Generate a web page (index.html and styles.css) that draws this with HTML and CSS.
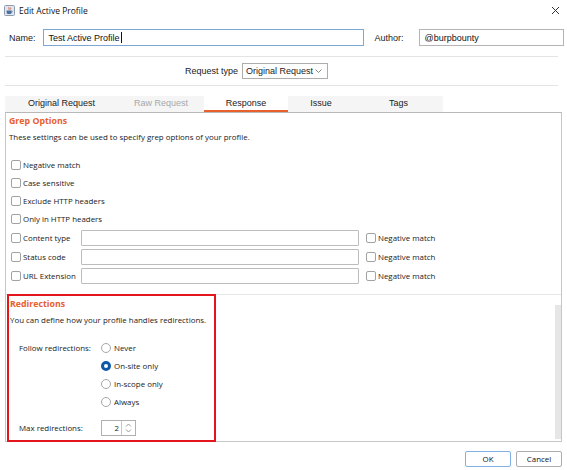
FILE: index.html
```html
<!DOCTYPE html>
<html lang="en">
<head>
  <meta charset="UTF-8" />
  <title>Edit Active Profile</title>
  <link rel="stylesheet" href="styles.css">
</head>
<body>
  <div class="titlebar">
    <svg class="app-icon" width="11" height="11" viewBox="0 0 11 11">
      <rect x="0.5" y="0.5" width="10" height="10" rx="1" fill="#dfe6ef" stroke="#8e9cb0"/>
      <path d="M5 2.2c-1 1 .8 1.4 0 2.6M6.6 2.6c-.6.7.5 1 0 1.8" stroke="#d9502a" stroke-width="0.9" fill="none"/>
      <path d="M2.6 5.6h5v1.8c0 1-1 1.6-2.5 1.6s-2.5-.6-2.5-1.6z" fill="#4d6f9a"/>
      <path d="M7.6 6.1c1 0 1 1.3 0 1.3" stroke="#4d6f9a" stroke-width="0.7" fill="none"/>
    </svg>
    <span class="title">Edit Active Profile</span>
    <svg class="close" width="9" height="9" viewBox="0 0 9 9">
      <path d="M1 1l7 7M8 1l-7 7" stroke="#333" stroke-width="1"/>
    </svg>
  </div>

  <div class="meta-row">
    <span class="meta-label">Name:</span>
    <div class="field name-field">Test Active Profile<span class="caret"></span></div>
    <span class="meta-label author-label">Author:</span>
    <div class="field author-field">@burpbounty</div>
  </div>

  <div class="rule rule-top"></div>

  <div class="request-row">
    <span class="meta-label">Request type</span>
    <div class="select">
      <span>Original Request</span>
      <svg width="7" height="4" viewBox="0 0 7 4"><path d="M0.5 0.5l3 3 3-3" stroke="#888" fill="none"/></svg>
    </div>
  </div>

  <div class="rule rule-mid"></div>

  <div class="tabs">
    <div class="tab tab-original">Original Request</div>
    <div class="tab tab-raw disabled">Raw Request</div>
    <div class="tab tab-response active">Response</div>
    <div class="tab tab-issue">Issue</div>
    <div class="tab tab-tags">Tags</div>
  </div>

  <div class="panel">
    <div class="content">
      <section class="grep">
        <h2 class="heading">Grep Options</h2>
        <p class="desc">These settings can be used to specify grep options of your profile.</p>

        <div class="check-list">
          <div class="check-row"><span class="box"></span>Negative match</div>
          <div class="check-row"><span class="box"></span>Case sensitive</div>
          <div class="check-row"><span class="box"></span>Exclude HTTP headers</div>
          <div class="check-row"><span class="box"></span>Only in HTTP headers</div>
        </div>

        <div class="field-list">
          <div class="field-row">
            <div class="check-row label-col"><span class="box"></span>Content type</div>
            <div class="text-input"></div>
            <div class="check-row"><span class="box"></span>Negative match</div>
          </div>
          <div class="field-row">
            <div class="check-row label-col"><span class="box"></span>Status code</div>
            <div class="text-input"></div>
            <div class="check-row"><span class="box"></span>Negative match</div>
          </div>
          <div class="field-row">
            <div class="check-row label-col"><span class="box"></span>URL Extension</div>
            <div class="text-input"></div>
            <div class="check-row"><span class="box"></span>Negative match</div>
          </div>
        </div>
      </section>

      <div class="lower">
        <section class="redirections">
          <h2 class="heading">Redirections</h2>
          <p class="desc">You can define how your profile handles redirections.</p>

          <div class="follow">
            <span class="follow-label">Follow redirections:</span>
            <div class="radio-list">
              <div class="radio-row"><span class="radio"></span>Never</div>
              <div class="radio-row"><span class="radio checked"></span>On-site only</div>
              <div class="radio-row"><span class="radio"></span>In-scope only</div>
              <div class="radio-row"><span class="radio"></span>Always</div>
            </div>
          </div>

          <div class="max-row">
            <span class="follow-label">Max redirections:</span>
            <div class="spinner">
              <span class="spin-value">2</span>
              <span class="spin-buttons">
                <svg width="7" height="10" viewBox="0 0 7 10">
                  <path d="M1 3.5l2.5-2.5 2.5 2.5M1 6.5l2.5 2.5 2.5-2.5" stroke="#999" fill="none"/>
                </svg>
              </span>
            </div>
          </div>
        </section>
        <div class="scrollbar"><div class="thumb"></div></div>
      </div>
    </div>
  </div>

  <div class="footer">
    <button class="btn btn-ok">OK</button>
    <button class="btn">Cancel</button>
  </div>
</body>
</html>
```

FILE: styles.css
```css
body {
  margin: 0;
  width: 567px;
  height: 470px;
  background: #fff;
  color: #222;
  font-family: 'Liberation Sans', Arial, sans-serif;
  font-size: 9px;
  overflow: hidden;
}

/* title bar */
.titlebar {
  height: 20px;
  display: flex;
  align-items: center;
  padding-left: 4px;
}
.app-icon {
  margin-right: 4px;
}
.title {
  font-family: 'Open Sans', sans-serif;
  font-size: 8.5px;
  color: #111;
}
.close {
  margin-left: auto;
  margin-right: 7px;
}

/* name / author */
.meta-row {
  display: flex;
  align-items: center;
  margin-top: 9px;
  padding-left: 9px;
}
.meta-label {
  color: #222;
  white-space: nowrap;
}
.field {
  box-sizing: border-box;
  height: 17px;
  border: 1px solid #b4b4b4;
  display: flex;
  align-items: center;
  padding-left: 5px;
  color: #111;
}
.name-field {
  width: 321px;
  margin-left: 7px;
  border-color: #7ea7d8;
}
.caret {
  display: inline-block;
  width: 1px;
  height: 11px;
  background: #111;
  margin-left: 1px;
}
.author-label {
  margin-left: 11px;
}
.author-field {
  width: 145px;
  margin-left: 15px;
}

.rule {
  height: 1px;
  background: #e4e4e4;
  margin: 0 9px 0 5px;
}
.rule-top {
  margin-top: 10px;
}
.rule-mid {
  margin-top: 6px;
}

/* request type */
.request-row {
  display: flex;
  align-items: center;
  margin: 6px 0 0 185px;
}
.select {
  box-sizing: border-box;
  height: 16px;
  width: 86px;
  margin-left: 4px;
  border: 1px solid #adadad;
  display: flex;
  align-items: center;
  padding: 0 5px 0 3px;
  justify-content: space-between;
  white-space: nowrap;
}

/* tabs */
.tabs {
  display: flex;
  width: 438px;
  height: 16px;
  margin: 10px 0 0 5px;
  background: #f5f5f5;
}
.tab {
  text-align: center;
  line-height: 15px;
  color: #222;
  box-sizing: border-box;
  white-space: nowrap;
}
.tab-original { width: 113px; }
.tab-raw { width: 86px; }
.tab-response { width: 84px; }
.tab-issue { width: 66px; }
.tab-tags { width: 89px; }
.tab.disabled {
  color: #a8a8a8;
}
.tab.active {
  background: #fff;
  border-bottom: 2px solid #e8602c;
}

/* main panel */
.panel {
  box-sizing: border-box;
  width: 557px;
  height: 330px;
  margin-left: 5px;
  border: 1px solid #c6c6c6;
  border-top-color: #b8b8b8;
}
.content {
  font-family: 'Open Sans', 'Noto Sans', sans-serif;
  font-size: 7.9px;
  color: #1a1a1a;
}
.heading {
  margin: 0;
  font-size: 8.8px;
  font-weight: bold;
  color: #e8602c;
  line-height: 14px;
}
.grep .heading {
  padding-top: 1px;
}
.desc {
  margin: 2px 0 0;
  line-height: 14px;
}
.grep {
  padding-left: 3px;
}
.check-list {
  margin-top: 12px;
}
.check-row {
  display: flex;
  align-items: center;
  height: 18px;
  white-space: nowrap;
}
.check-list .check-row {
  padding-left: 2px;
}
.box {
  box-sizing: border-box;
  width: 10px;
  height: 10px;
  border: 1px solid #a2a2a2;
  border-radius: 2px;
  margin-right: 2px;
  background: #fff;
}
.field-row {
  display: flex;
  align-items: center;
  height: 19px;
  padding-left: 2px;
}
.label-col {
  width: 70px;
}
.text-input {
  box-sizing: border-box;
  width: 278px;
  height: 16px;
  border: 1px solid #bcbcbc;
  border-radius: 1px;
  margin-right: 7px;
}

.lower {
  display: flex;
  margin-top: 9px;
  border-top: 1px solid #e6e6e6;
}
.redirections {
  box-sizing: border-box;
  width: 209px;
  height: 148px;
  margin-left: 1px;
  margin-top: -1px;
  border: 2px solid #e3141c;
  padding: 1px 0 0 1px;
}
.redirections .desc {
  margin-top: 2px;
}
.follow {
  display: flex;
  margin-top: 12px;
  padding-left: 9px;
}
.follow-label {
  width: 82px;
  line-height: 18px;
  white-space: nowrap;
}
.radio-row {
  display: flex;
  align-items: center;
  height: 18px;
  white-space: nowrap;
}
.radio {
  box-sizing: border-box;
  width: 10px;
  height: 10px;
  border: 1px solid #a6a6a6;
  border-radius: 50%;
  margin-right: 3px;
}
.radio.checked {
  border: 3px solid #0f5aa8;
}
.max-row {
  display: flex;
  align-items: center;
  margin-top: 8px;
  padding-left: 9px;
}
.spinner {
  box-sizing: border-box;
  display: flex;
  width: 35px;
  height: 16px;
  border: 1px solid #b0b0b0;
}
.spin-value {
  width: 20px;
  text-align: right;
  padding-right: 2px;
  box-sizing: border-box;
  line-height: 14px;
  border-right: 1px solid #c8c8c8;
}
.spin-buttons {
  flex: 1;
  display: flex;
  align-items: center;
  justify-content: center;
}
.scrollbar {
  margin-left: auto;
  width: 6px;
}
.thumb {
  margin-top: 10px;
  height: 134px;
  background: #e6e6e6;
}

/* footer */
.footer {
  display: flex;
  justify-content: flex-end;
  gap: 5px;
  margin: 9px 5px 0 0;
}
.btn {
  box-sizing: border-box;
  width: 46px;
  height: 16px;
  padding: 0;
  background: #fff;
  border: 1px solid #adadad;
  border-radius: 2px;
  font-family: 'Open Sans', sans-serif;
  font-size: 7.9px;
  color: #111;
}
.btn-ok {
  border-color: #7fb1e6;
}
```
